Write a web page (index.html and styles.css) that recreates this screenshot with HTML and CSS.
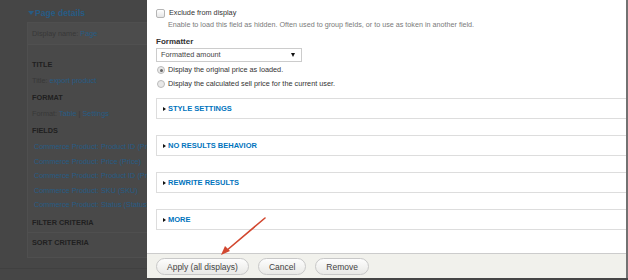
FILE: index.html
```html
<!DOCTYPE html>
<html lang="en">
<head>
	<meta charset="UTF-8">
	<title>Configure field: Commerce Product: Price</title>
	<link rel="stylesheet" href="styles.css">
</head>
<body>
	<div class="page">
		<h2 class="details-title"><span class="caret"></span>Page details</h2>
		<div class="details">
			<div class="display-name">Display name: <a href="#">Page</a></div>
			<div class="section">
				<h3>TITLE</h3>
				<p><span class="lbl">Title:</span> <a href="#">export product</a></p>
			</div>
			<div class="section">
				<h3>FORMAT</h3>
				<p><span class="lbl">Format:</span> <a href="#">Table</a> <span class="lbl">|</span> <a href="#">Settings</a></p>
			</div>
			<div class="section">
				<h3>FIELDS</h3>
				<ul class="fields">
					<li><a href="#">Commerce Product: Product ID (Product ID)</a></li>
					<li><a href="#">Commerce Product: Price (Price)</a></li>
					<li><a href="#">Commerce Product: Product ID (Product ID)</a></li>
					<li><a href="#">Commerce Product: SKU (SKU)</a></li>
					<li><a href="#">Commerce Product: Status (Status)</a></li>
				</ul>
			</div>
			<div class="section bordered">
				<h3>FILTER CRITERIA</h3>
			</div>
			<div class="section">
				<h3>SORT CRITERIA</h3>
			</div>
		</div>
		<div class="page-foot"></div>
	</div>

	<div class="modal">
		<div class="modal-body">
			<label class="check-row"><span class="checkbox"></span>Exclude from display</label>
			<div class="description">Enable to load this field as hidden. Often used to group fields, or to use as token in another field.</div>

			<div class="field-label">Formatter</div>
			<div class="select">Formatted amount<span class="select-arrow"></span></div>

			<label class="radio-row"><span class="radio checked"></span>Display the original price as loaded.</label>
			<label class="radio-row second"><span class="radio"></span>Display the calculated sell price for the current user.</label>

			<div class="fieldsets">
				<div class="fieldset"><span class="tri"></span>STYLE SETTINGS</div>
				<div class="fieldset"><span class="tri"></span>NO RESULTS BEHAVIOR</div>
				<div class="fieldset"><span class="tri"></span>REWRITE RESULTS</div>
				<div class="fieldset"><span class="tri"></span>MORE</div>
			</div>
		</div>
		<div class="modal-buttons">
			<button class="btn">Apply (all displays)</button>
			<button class="btn">Cancel</button>
			<button class="btn">Remove</button>
		</div>
	</div>

	<svg class="arrow" width="628" height="280" viewBox="0 0 628 280">
		<line x1="265" y1="218" x2="226" y2="251" stroke="#d2472f" stroke-width="1.6" stroke-linecap="round"/>
		<polygon points="221,255 225,246 230,251" fill="#d2472f"/>
	</svg>
</body>
</html>
```

FILE: styles.css
```css
html, body {
	margin: 0;
	padding: 0;
}
body {
	width: 628px;
	height: 280px;
	overflow: hidden;
	background: #464646;
	font-family: "Liberation Sans", Arial, sans-serif;
	font-size: 7.3px;
	color: #333;
	position: relative;
}
a {
	color: #275c85;
	text-decoration: none;
}

/* the page behind the dialog (already dimmed) */
.page {
	padding-top: 4px;
}
.details-title {
	margin: 0 0 0 28px;
	height: 18px;
	line-height: 10px;
	font-size: 8.6px;
	font-weight: bold;
	color: #275c85;
	display: flex;
	align-items: center;
}
.caret {
	width: 0;
	height: 0;
	border-left: 3px solid transparent;
	border-right: 3px solid transparent;
	border-top: 4px solid #275c85;
	margin-right: 1px;
}
.details {
	margin-left: 27px;
	border: 1px solid #4f4f4f;
	border-right: none;
	background: #494949;
	padding-bottom: 6px;
}
.display-name {
	height: 21px;
	line-height: 21px;
	padding-left: 4px;
	background: #4c4c4c;
	border-bottom: 1px solid #505050;
	color: #383838;
	margin-bottom: 12px;
}
.section {
	padding-left: 4px;
}
.section h3 {
	margin: 0;
	height: 16px;
	line-height: 16px;
	font-size: 7.3px;
	font-weight: bold;
	color: #202020;
}
.section p {
	margin: 0;
	height: 17px;
	line-height: 16px;
}
.lbl {
	color: #383838;
}
.fields {
	list-style: none;
	margin: 0;
	padding: 1px 0 2px 2px;
}
.fields li {
	height: 14.6px;
	line-height: 14px;
	white-space: nowrap;
}
.section.bordered {
	border-bottom: 1px solid #4f4f4f;
	padding-bottom: 1px;
	margin-bottom: 2px;
}
.page-foot {
	margin-top: 10px;
	height: 13px;
	border-top: 1px solid #404040;
	border-bottom: 1px solid #555;
}

/* dialog */
.modal {
	position: absolute;
	left: 147px;
	top: 0;
	width: 479px;
	height: 278px;
	background: #fff;
	border-right: 2px solid #727272;
	display: flex;
	flex-direction: column;
	overflow: hidden;
}
.modal-body {
	flex: 1;
	padding: 8px 0 0 9px;
	overflow: hidden;
	color: #333;
}
.check-row, .radio-row {
	display: flex;
	align-items: center;
	height: 10px;
	line-height: 10px;
}
.checkbox {
	width: 7px;
	height: 7px;
	border: 1px solid #b5b5b5;
	border-radius: 2px;
	background: linear-gradient(#fff, #e6e6e6);
	margin-right: 4px;
}
.description {
	margin: 2px 0 0 12px;
	height: 10px;
	line-height: 10px;
	font-size: 7.2px;
	color: #7a7a7a;
	white-space: nowrap;
}
.field-label {
	margin-top: 7px;
	height: 10px;
	line-height: 10px;
	font-size: 8px;
	font-weight: bold;
	color: #333;
}
.select {
	margin-top: 1px;
	width: 140px;
	height: 12px;
	line-height: 12px;
	padding-left: 4px;
	border: 1px solid #ccc;
	position: relative;
	color: #444;
}
.select-arrow {
	position: absolute;
	right: 6px;
	top: 4px;
	width: 0;
	height: 0;
	border-left: 2px solid transparent;
	border-right: 2px solid transparent;
	border-top: 4px solid #111;
}
.radio-row {
	margin-top: 3px;
}
.radio-row.second {
	margin-top: 4px;
}
.radio {
	width: 6px;
	height: 6px;
	border: 1px solid #bbb;
	border-radius: 50%;
	background: #e8e8e8;
	margin: 0 3px 0 1px;
	position: relative;
}
.radio.checked::after {
	content: "";
	position: absolute;
	left: 1.5px;
	top: 1.5px;
	width: 3px;
	height: 3px;
	border-radius: 50%;
	background: #666;
}
.fieldsets {
	margin-top: 9px;
	display: flex;
	flex-direction: column;
	gap: 16px;
	width: 500px;
}
.fieldset {
	height: 19px;
	border: 1px solid #ddd;
	padding-left: 6px;
	font-size: 7.5px;
	font-weight: bold;
	color: #0074bd;
	display: flex;
	align-items: center;
}
.tri {
	width: 0;
	height: 0;
	border-top: 2px solid transparent;
	border-bottom: 2px solid transparent;
	border-left: 3px solid #111;
	margin-right: 2px;
}
.modal-buttons {
	height: 24px;
	border-top: 1px solid #ccc;
	background: #f1f1ec;
	display: flex;
	align-items: center;
	padding-left: 9px;
	gap: 9px;
}
.btn {
	height: 17px;
	padding: 0 10px;
	border: 1px solid #c8c8c8;
	border-radius: 9px;
	background: linear-gradient(#fdfdfd, #e9e9e6);
	font-family: "Liberation Sans", Arial, sans-serif;
	font-size: 8.5px;
	color: #444;
	margin-top: 1px;
}

/* annotation arrow drawn over the screenshot */
.arrow {
	position: absolute;
	left: 0;
	top: 0;
	pointer-events: none;
}
```
